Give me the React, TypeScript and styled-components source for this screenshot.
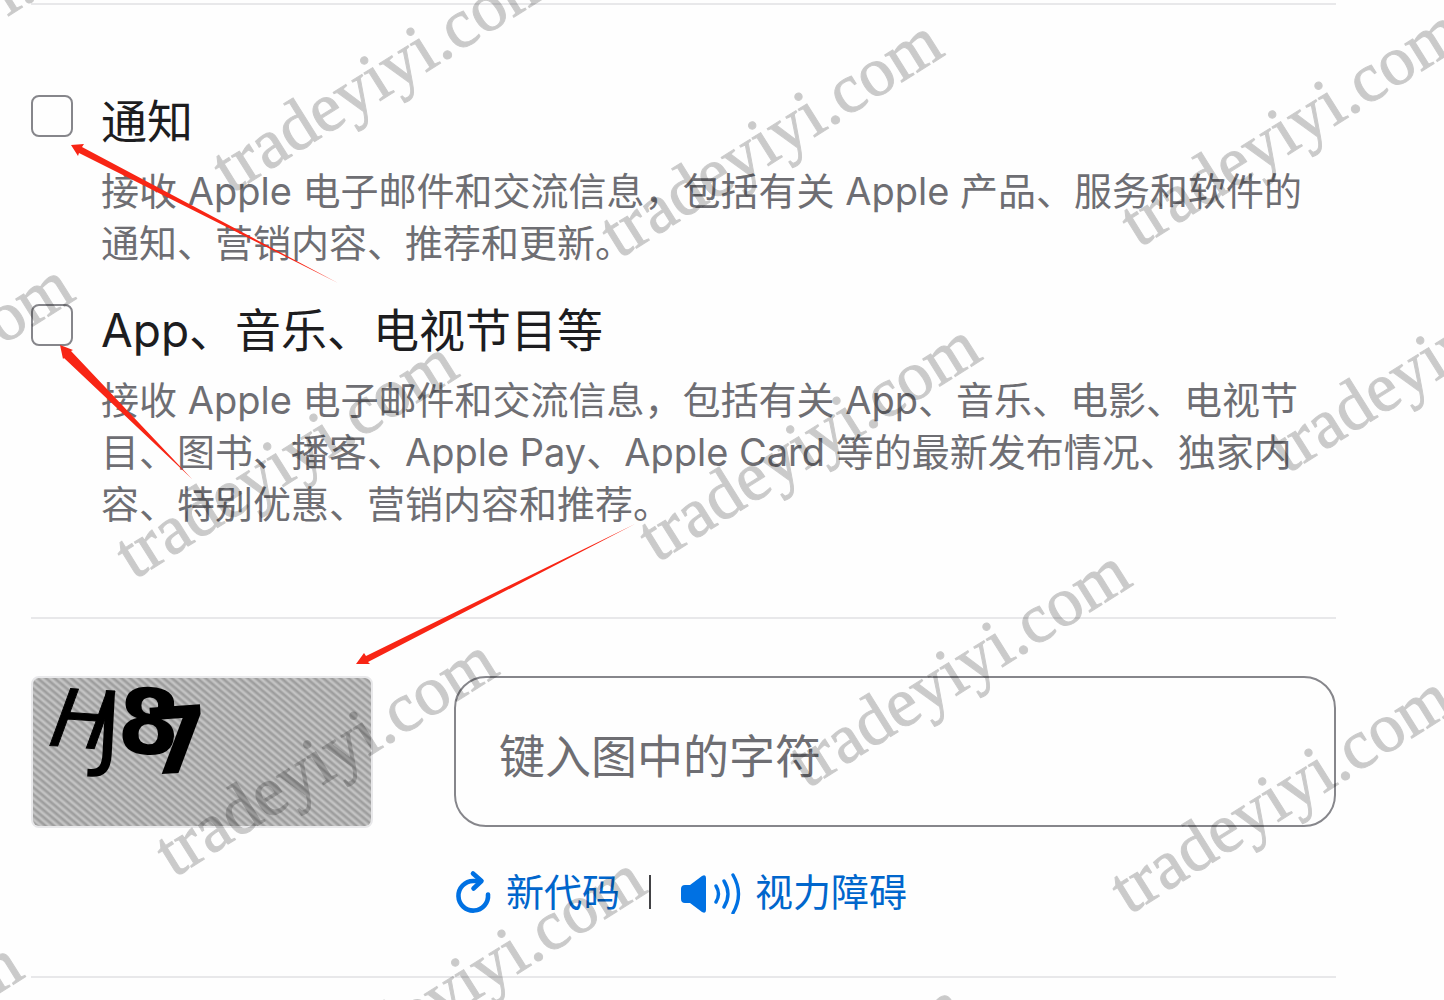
import React from "react";
import styled, { createGlobalStyle } from "styled-components";

const GlobalStyle = createGlobalStyle`
  *, *::before, *::after { box-sizing: border-box; }
  body {
    margin: 0;
    background: #fefefe;
    color: #1d1d1f;
    font-family: Inter, "Noto Sans CJK SC", sans-serif;
  }
`;

const Page = styled.main`
  position: relative;
  min-height: 100vh;
  overflow: hidden;
  padding: 3px 108px 22px 31px;
`;

const Divider = styled.hr`
  height: 2px;
  margin: 0;
  border: 0;
  background: #e8e8ea;
`;

const Options = styled.section`
  display: flex;
  flex-direction: column;
  gap: 35px;
  padding: 90px 0 87px;
`;

const Option = styled.div`
  display: grid;
  grid-template-columns: 42px 1fr;
  column-gap: 28px;
`;

const Checkbox = styled.input`
  appearance: none;
  width: 42px;
  height: 42px;
  margin: 0;
  border: 2px solid #86868b;
  border-radius: 8px;
  background: transparent;
  &:checked { background: #0071e3; }
`;

const OptionText = styled.div`
  padding-right: 8px;
`;

const OptionTitle = styled.label`
  display: block;
  font-size: 46px;
  line-height: 52px;
`;

const OptionNote = styled.p`
  margin: 18px 0 0;
  color: #6e6e73;
  font-size: 38px;
  line-height: 52px;
`;

const Captcha = styled.section`
  display: grid;
  grid-template-columns: 342px 1fr;
  column-gap: 81px;
  align-items: start;
  padding: 57px 0 56px;
`;

const CaptchaImage = styled.svg`
  display: block;
  width: 342px;
  height: 152px;
  border: 2px solid #e8e8ea;
  border-radius: 8px;
`;

const Answer = styled.input`
  display: block;
  width: 100%;
  height: 151px;
  padding: 8px 43px 0;
  border: 2px solid #86868b;
  border-radius: 32px;
  background: transparent;
  color: #1d1d1f;
  font: 46px Inter, "Noto Sans CJK SC", sans-serif;
  &::placeholder { color: #6e6e73; opacity: 1; }
`;

const Actions = styled.div`
  display: flex;
  align-items: center;
  gap: 29px;
  height: 56px;
  margin-top: 37px;
`;

const Separator = styled.span`
  width: 2px;
  height: 34px;
  background: #424245;
`;

const Action = styled.button`
  display: flex;
  align-items: center;
  gap: 14px;
  padding: 0;
  border: 0;
  background: none;
  color: #0066cc;
  font: 38px/56px Inter, "Noto Sans CJK SC", sans-serif;
  cursor: pointer;
  svg { display: block; color: #0071e3; }
`;

const Overlay = styled.div`
  position: absolute;
  inset: 0;
  overflow: hidden;
  pointer-events: none;
`;

const Mark = styled.span<{ $x: number; $y: number }>`
  position: absolute;
  left: ${(p) => p.$x}px;
  top: ${(p) => p.$y}px;
  transform: rotate(-32deg);
  transform-origin: 0 0;
  color: #000;
  -webkit-text-stroke: 1px #000;
  opacity: 0.2;
  font: 70px/70px "Liberation Serif", serif;
  white-space: nowrap;
`;

const Arrows = styled.svg`
  position: absolute;
  left: 0;
  top: 0;
  fill: #f82515;
`;

const marks = [
  [200, 145], [588, 210], [1108, 199], [103, 531], [626, 514], [776, 740],
  [143, 829], [1098, 866], [1256, 425], [-281, 454], [-332, 1132], [291, 1047],
  [610, 1174], [-218, 89],
];

const options = [
  {
    id: "news",
    title: "通知",
    note: "接收 Apple 电子邮件和交流信息，包括有关 Apple 产品、服务和软件的通知、营销内容、推荐和更新。",
  },
  {
    id: "media",
    title: "App、音乐、电视节目等",
    note: "接收 Apple 电子邮件和交流信息，包括有关 App、音乐、电影、电视节目、图书、播客、Apple Pay、Apple Card 等的最新发布情况、独家内容、特别优惠、营销内容和推荐。",
  },
];

const ReloadIcon = () => (
  <svg width="38" height="44" viewBox="0 0 38 44" fill="none" stroke="currentColor" strokeWidth="4.6" strokeLinecap="round" strokeLinejoin="round" aria-hidden="true">
    <path d="M34 24.500A14.800 14.800 0 1 1 19.200 11H26" />
    <path d="M19 3.500L27.500 11L19.500 18.500" />
  </svg>
);

const SpeakerIcon = () => (
  <svg width="61" height="44" viewBox="0 0 61 44" fill="none" stroke="currentColor" strokeWidth="3.4" strokeLinecap="round" aria-hidden="true">
    <path d="M5 15H10L22 6Q26 4 26 8V40Q26 44 22 42L10 33H5Q1 33 1 29V19Q1 15 5 15Z" fill="currentColor" stroke="none" />
    <path d="M36 16Q41 24 36 32M44 11Q52 24 44 37M53 5Q64 24 53 43" />
  </svg>
);

export default function App() {
  return (
    <Page>
      <GlobalStyle />
      <Divider />
      <Options>
        {options.map((o) => (
          <Option key={o.id}>
            <Checkbox type="checkbox" id={o.id} />
            <OptionText>
              <OptionTitle htmlFor={o.id}>{o.title}</OptionTitle>
              <OptionNote>{o.note}</OptionNote>
            </OptionText>
          </Option>
        ))}
      </Options>
      <Divider />
      <Captcha>
        <CaptchaImage viewBox="0 0 338 148" role="img" aria-label="HJ87">
          <defs>
            <pattern id="hatch" width="40" height="5.4" patternUnits="userSpaceOnUse" patternTransform="rotate(40)">
              <rect width="40" height="6" fill="#c3c3c3" />
              <rect width="40" height="1" y="1" fill="#adadad" />
              <rect width="40" height="1.4" y="2" fill="#929292" />
              <rect width="40" height="1" y="3.400" fill="#b0b0b0" />
            </pattern>
          </defs>
          <rect width="338" height="148" fill="url(#hatch)" />
          <g fill="#000" fontFamily="DejaVu Sans, sans-serif">
            <text transform="translate(9 67) rotate(4) skewX(-16)" fontSize="80" stroke="#000" strokeWidth="1">H</text>
            <text transform="translate(60 80) rotate(3)" fontSize="94">J</text>
            <text transform="translate(83 74) rotate(3)" fontSize="90" fontWeight="bold">8</text>
            <text transform="translate(115 97) rotate(-4)" fontSize="92" fontWeight="bold">7</text>
          </g>
        </CaptchaImage>
        <div>
          <Answer type="text" aria-label="键入图中的字符" placeholder="键入图中的字符" />
          <Actions>
            <Action type="button"><ReloadIcon />新代码</Action>
            <Separator />
            <Action type="button"><SpeakerIcon />视力障碍</Action>
          </Actions>
        </div>
      </Captcha>
      <Divider />
      <Overlay aria-hidden="true">
        {marks.map(([x, y]) => (
          <Mark key={`${x}-${y}`} $x={x} $y={y}>tradeyiyi.com</Mark>
        ))}
        <Arrows width="660" height="700" viewBox="0 0 660 700">
          <path d="M71 145L84 144L82 147L338 283L79 153L78 156Z" />
          <path d="M60 345L73 350L71 351L192 479L64 358L63 359Z" />
          <path d="M356 664L364 653L366 656L635 524L368 662L370 664Z" />
        </Arrows>
      </Overlay>
    </Page>
  );
}
